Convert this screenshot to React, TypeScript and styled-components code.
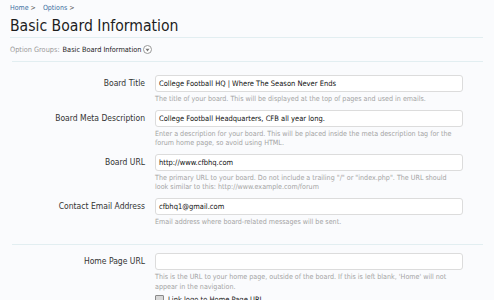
import React from 'react'
import styled, { createGlobalStyle } from 'styled-components'

const Global = createGlobalStyle`
  html, body {
    margin: 0;
    padding: 0;
    background: #fafbfd;
  }
  body {
    font-family: "DejaVu Sans Condensed", "DejaVu Sans", sans-serif;
    color: #222;
    overflow: hidden;
  }
`

const Page = styled.div`
  width: 494px;
  height: 300px;
  overflow: hidden;
  padding: 4px 11px 0 10px;
  box-sizing: border-box;
`

const Crumbs = styled.div`
  display: flex;
  gap: 7px;
  font-size: 7px;
  line-height: 9px;
  color: #3a6fa0;
`

const Crumb = styled.span`
  &::after {
    content: ' >';
    color: #555;
  }
`

const Heading = styled.h1`
  margin: 3px 0 0;
  font-size: 15.6px;
  font-weight: normal;
  line-height: 21px;
  color: #1d1d1d;
`

const Rule = styled.div<{ $left?: number }>`
  height: 1px;
  background: #e2eef1;
  margin-left: ${p => p.$left ?? 0}px;
`

const Groups = styled.div`
  display: flex;
  align-items: center;
  height: 23px;
  font-size: 7.3px;
  color: #9a9a9a;
`

const GroupValue = styled.span`
  color: #1a1a1a;
  margin-left: 3px;
`

const Chooser = styled.span`
  display: inline-flex;
  align-items: center;
  justify-content: center;
  width: 7px;
  height: 7px;
  margin-left: 2px;
  border: 1px solid #999;
  border-radius: 50%;
  background: #fff;
`

const Form = styled.div`
  display: flex;
  flex-direction: column;
`

const Section = styled.div<{ $top: number; $bottom: number }>`
  display: flex;
  flex-direction: column;
  gap: 6px;
  padding: ${p => p.$top}px 0 ${p => p.$bottom}px;
`

const Row = styled.div`
  display: grid;
  grid-template-columns: 135px 308px;
  column-gap: 10px;
  align-items: start;
`

const Label = styled.div`
  text-align: right;
  font-size: 8.5px;
  line-height: 17px;
  color: #333;
`

const Field = styled.div`
  display: flex;
  flex-direction: column;
`

const Input = styled.div`
  height: 17px;
  box-sizing: border-box;
  border: 1px solid #dcdcdc;
  border-radius: 3px;
  background: #fff;
  padding: 0 3px;
  font-size: 7.5px;
  line-height: 15px;
  color: #111;
  white-space: nowrap;
  overflow: hidden;
`

const Explain = styled.div`
  margin-top: 2px;
  font-size: 7.1px;
  line-height: 9.5px;
  color: #a3a3a3;
  padding-right: 8px;
`

const Check = styled.div`
  display: flex;
  align-items: center;
  gap: 4px;
  margin-top: 4px;
  font-size: 7.5px;
  line-height: 9px;
  color: #222;
`

const Box = styled.span`
  width: 7px;
  height: 7px;
  border: 1px solid #8a8a8a;
  background: #d8d8d8;
  border-radius: 1px;
`

interface Option {
  label: string
  value: string
  explain: string
}

const basic: Option[] = [
  {
    label: 'Board Title',
    value: 'College Football HQ | Where The Season Never Ends',
    explain: 'The title of your board. This will be displayed at the top of pages and used in emails.',
  },
  {
    label: 'Board Meta Description',
    value: 'College Football Headquarters, CFB all year long.',
    explain:
      'Enter a description for your board. This will be placed inside the meta description tag for the forum home page, so avoid using HTML.',
  },
  {
    label: 'Board URL',
    value: 'http://www.cfbhq.com',
    explain:
      'The primary URL to your board. Do not include a trailing "/" or "index.php". The URL should look similar to this: http://www.example.com/forum',
  },
  {
    label: 'Contact Email Address',
    value: 'cfbhq1@gmail.com',
    explain: 'Email address where board-related messages will be sent.',
  },
]

const OptionRow: React.FC<{ option: Option; children?: React.ReactNode }> = ({ option, children }) => (
  <Row>
    <Label>{option.label}</Label>
    <Field>
      <Input>{option.value}</Input>
      <Explain>{option.explain}</Explain>
      {children}
    </Field>
  </Row>
)

const App = () => {
  return (
    <Page>
      <Global />
      <Crumbs>
        <Crumb>Home</Crumb>
        <Crumb>Options</Crumb>
      </Crumbs>
      <Heading>Basic Board Information</Heading>
      <Rule />
      <Groups>
        Option Groups:
        <GroupValue>Basic Board Information</GroupValue>
        <Chooser>
          <svg width="5" height="4" viewBox="0 0 5 4">
            <path d="M0.5 0.8 L4.5 0.8 L2.5 3.4 Z" fill="#777" />
          </svg>
        </Chooser>
      </Groups>
      <Rule $left={2} />
      <Form>
        <Section $top={13} $bottom={18}>
          {basic.map(o => (
            <OptionRow key={o.label} option={o} />
          ))}
        </Section>
        <Rule $left={2} />
        <Section $top={8} $bottom={0}>
          <OptionRow
            option={{
              label: 'Home Page URL',
              value: '',
              explain:
                "This is the URL to your home page, outside of the board. If this is left blank, 'Home' will not appear in the navigation.",
            }}
          >
            <Check>
              <Box />
              Link logo to Home Page URL
            </Check>
          </OptionRow>
        </Section>
      </Form>
    </Page>
  )
}

export default App
